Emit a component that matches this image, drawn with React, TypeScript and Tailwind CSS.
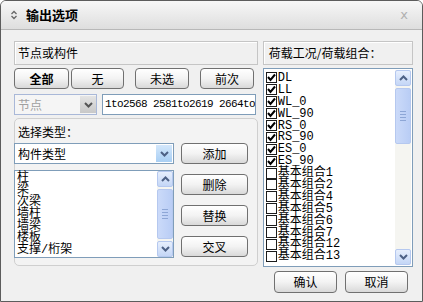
import React from "react";

const FONT = { fontFamily: '"Noto Sans CJK SC", "Noto Sans", sans-serif' };
const LIST_FONT = { fontFamily: '"Liberation Mono", "Noto Sans CJK SC", monospace' };

const leftItems = ["柱", "梁", "次梁", "墙柱", "墙梁", "楼板", "支撑/桁架"];

const loadItems: { name: string; on: boolean }[] = [
  { name: "DL", on: true },
  { name: "LL", on: true },
  { name: "WL_0", on: true },
  { name: "WL_90", on: true },
  { name: "RS_0", on: true },
  { name: "RS_90", on: true },
  { name: "ES_0", on: true },
  { name: "ES_90", on: true },
  { name: "基本组合1", on: false },
  { name: "基本组合2", on: false },
  { name: "基本组合4", on: false },
  { name: "基本组合5", on: false },
  { name: "基本组合6", on: false },
  { name: "基本组合7", on: false },
  { name: "基本组合12", on: false },
  { name: "基本组合13", on: false },
];

function Chevron({ up, color = "#4d6185" }: { up?: boolean; color?: string }) {
  return (
    <svg width="9" height="6" viewBox="0 0 9 6">
      <path
        d={up ? "M1 5 L4.5 1.5 L8 5" : "M1 1 L4.5 4.5 L8 1"}
        fill="none"
        stroke={color}
        strokeWidth="2"
      />
    </svg>
  );
}

function Btn({ label, className, bold }: { label: string; className: string; bold?: boolean }) {
  return (
    <div
      className={`flex items-center justify-center rounded-[4px] border border-[#707070] bg-gradient-to-b from-white via-[#f3f3f3] to-[#d9d9d9] text-[12px] text-black ${bold ? "font-bold" : ""} ${className}`}
    >
      {label}
    </div>
  );
}

function ScrollBar({ thumbTop, thumbH }: { thumbTop: number; thumbH: number }) {
  return (
    <div className="flex w-[16px] flex-col bg-[#f5f5f1]">
      <div className="flex h-[16px] items-center justify-center rounded-[2px] border border-[#b5c8ef] bg-gradient-to-b from-[#e7effd] to-[#c4d6f6]">
        <Chevron up />
      </div>
      <div className="relative flex-1">
        <div
          className="absolute left-0 right-0 flex flex-col items-center justify-center gap-[2px] rounded-[2px] border border-[#b5c8ef] bg-gradient-to-r from-[#cbdaf9] to-[#b9cdf5]"
          style={{ top: thumbTop, height: thumbH }}
        >
          <div className="h-px w-[6px] bg-[#8da6d6]" />
          <div className="h-px w-[6px] bg-[#8da6d6]" />
          <div className="h-px w-[6px] bg-[#8da6d6]" />
          <div className="h-px w-[6px] bg-[#8da6d6]" />
        </div>
      </div>
      <div className="flex h-[16px] items-center justify-center rounded-[2px] border border-[#b5c8ef] bg-gradient-to-b from-[#e7effd] to-[#c4d6f6]">
        <Chevron />
      </div>
    </div>
  );
}

function Check({ on }: { on: boolean }) {
  return (
    <div className="flex h-[11px] w-[11px] shrink-0 items-center justify-center border border-[#1c1c1c] bg-white">
      {on && (
        <svg width="9" height="9" viewBox="0 0 9 9">
          <path d="M1 4 L3.5 7 L8 1.5" fill="none" stroke="#000" strokeWidth="2" />
        </svg>
      )}
    </div>
  );
}

export default function App() {
  return (
    <div
      className="flex h-[302px] w-[423px] flex-col overflow-hidden rounded-t-[6px] border border-[#5c5c5c] bg-[#f0f0f0]"
      style={FONT}
    >
      {/* title bar */}
      <div className="flex h-[29px] shrink-0 items-center border-b border-[#b8b8b8] bg-gradient-to-b from-[#f7f7f7] to-[#dedede] pl-[9px] pr-[14px]">
        <svg width="8" height="10" viewBox="0 0 8 10" className="mr-[8px]">
          <path d="M1.5 4 L4 1.5 L6.5 4 M1.5 6 L4 8.5 L6.5 6" fill="none" stroke="#666" strokeWidth="1.3" />
        </svg>
        <span className="text-[13px] font-bold text-black">输出选项</span>
        <span className="ml-auto text-[13px] text-[#b0b0b0]" style={{ fontFamily: '"DejaVu Sans", sans-serif' }}>
          x
        </span>
      </div>

      {/* body */}
      <div className="flex flex-1 flex-col pl-[13px] pr-[9px] pt-[11px]">
        <div className="flex gap-[5px]">
          {/* left column */}
          <div className="flex w-[245px] flex-col">
            <div className="flex h-[24px] items-center border border-[#c5c5c5] pl-[3px] text-[12px] text-black shadow-[inset_1px_1px_0_#fff]">
              节点或构件
            </div>
            <div className="mt-[3px] flex h-[21px]">
              <Btn label="全部" bold className="w-[55px]" />
              <Btn label="无" className="ml-[2px] w-[53px]" />
              <Btn label="未选" className="ml-[11px] w-[54px]" />
              <Btn label="前次" className="ml-[11px] w-[54px]" />
            </div>
            <div className="mt-[5px] flex h-[21px]">
              <div className="flex w-[83px] items-center border border-[#a9b8d8] bg-[#f5f5f5] pl-[3px]">
                <span className="flex-1 text-[12px] text-[#a0a0a0]">节点</span>
                <div className="flex h-[17px] w-[16px] items-center justify-center bg-gradient-to-b from-[#e4e4e4] to-[#c8c8c8]">
                  <Chevron color="#555" />
                </div>
              </div>
              <div className="ml-[5px] flex w-[154px] items-center overflow-hidden whitespace-nowrap border border-[#7f9db9] bg-white pl-[2px]">
                <span className="text-[11px] tracking-[-0.6px] text-black" style={{ fontFamily: '"Liberation Mono", monospace' }}>
                  1to2568 2581to2619 2664to2700
                </span>
              </div>
            </div>
            <div className="mt-[3px] flex h-[148px] flex-col rounded-[5px] border border-[#cfcfcf] bg-[#f3f3f3]">
              <div className="pl-[3px] pt-[5px] text-[12px] leading-[16px] text-black">选择类型：</div>
              <div className="mt-[3px] flex">
                <div className="flex h-[21px] w-[160px] items-center border border-[#7f9db9] bg-white pl-[3px] -ml-px">
                  <span className="flex-1 text-[12px] text-black">构件类型</span>
                  <div className="mr-px flex h-[17px] w-[16px] items-center justify-center bg-gradient-to-b from-[#d3e7fb] to-[#a9cff4]">
                    <Chevron />
                  </div>
                </div>
                <div className="ml-[7px] flex flex-col gap-[10px]">
                  <Btn label="添加" className="h-[21px] w-[67px]" />
                </div>
              </div>
              <div className="mt-[6px] flex">
                <div className="flex h-[88px] w-[160px] border border-[#7f9db9] bg-white -ml-px">
                  <div className="flex-1 pl-[2px] pt-[1px] text-[12px] leading-[12px] text-black" style={LIST_FONT}>
                    {leftItems.map((t) => (
                      <div key={t} className="h-[12px]">
                        {t}
                      </div>
                    ))}
                  </div>
                  <ScrollBar thumbTop={2} thumbH={50} />
                </div>
                <div className="ml-[7px] flex flex-col gap-[10px] pt-[4px]">
                  <Btn label="删除" className="h-[21px] w-[67px]" />
                  <Btn label="替换" className="h-[21px] w-[67px]" />
                  <Btn label="交叉" className="h-[21px] w-[67px]" />
                </div>
              </div>
            </div>
          </div>

          {/* right column */}
          <div className="flex w-[151px] flex-col">
            <div className="flex h-[24px] items-center border border-[#c5c5c5] pl-[5px] text-[12px] text-black shadow-[inset_1px_1px_0_#fff]">
              荷载工况/荷载组合：
            </div>
            <div className="mt-[3px] flex h-[199px] border border-[#7f9db9] bg-white p-px">
              <div className="flex-1 pl-px pt-[2px] text-[12px] leading-[12px] text-black" style={LIST_FONT}>
                {loadItems.map((it) => (
                  <div key={it.name} className="flex h-[11.9px] items-center">
                    <Check on={it.on} />
                    <span className="ml-px">{it.name}</span>
                  </div>
                ))}
              </div>
              <ScrollBar thumbTop={2} thumbH={56} />
            </div>
          </div>
        </div>

        {/* bottom buttons */}
        <div className="mt-[4px] flex justify-end gap-[8px] pr-[5px]">
          <Btn label="确认" className="h-[22px] w-[63px]" />
          <Btn label="取消" className="h-[22px] w-[63px]" />
        </div>
      </div>
    </div>
  );
}
